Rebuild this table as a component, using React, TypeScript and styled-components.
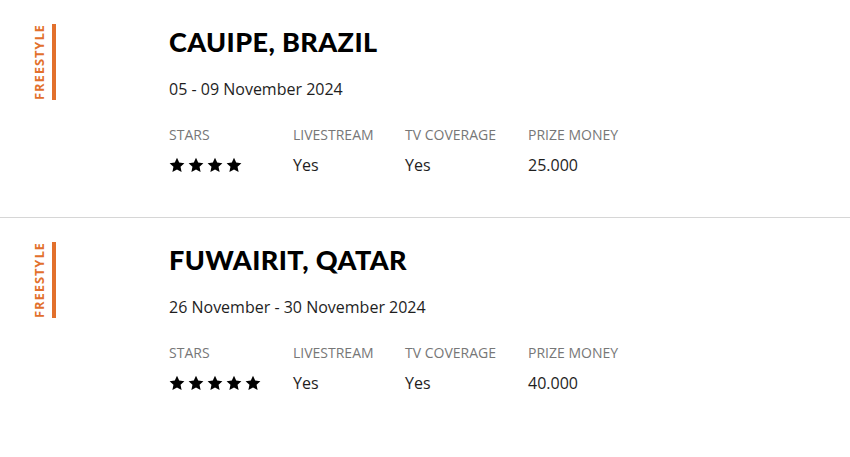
import React from "react";
import styled, { createGlobalStyle } from "styled-components";

const Global = createGlobalStyle`
  html, body { margin: 0; padding: 0; background: #fff; }
  body { font-family: "Open Sans", "Liberation Sans", sans-serif; color: #1a1a1a; }
`;

const List = styled.div`
  display: flex;
  flex-direction: column;
`;

const Event = styled.section<{ $last?: boolean }>`
  display: flex;
  padding-top: 24px;
  height: ${(p) => (p.$last ? "215px" : "193px")};
  border-bottom: ${(p) => (p.$last ? "none" : "1px solid #d6d6d6")};
  box-sizing: content-box;
`;

const TagCol = styled.div`
  width: 169px;
  flex: none;
  display: flex;
  padding-left: 32px;
  box-sizing: border-box;
  align-items: flex-start;
`;

const Tag = styled.div`
  display: flex;
  align-items: stretch;
  height: 76px;
`;

const TagText = styled.span`
  writing-mode: vertical-rl;
  transform: rotate(180deg);
  font-family: "Open Sans", sans-serif;
  font-weight: 700;
  font-size: 13px;
  letter-spacing: 0.9px;
  color: #e2702c;
  text-align: center;
  line-height: 14px;
  margin-right: 6px;
`;

const TagBar = styled.div`
  width: 4px;
  background: #e2702c;
`;

const Body = styled.div`
  display: flex;
  flex-direction: column;
`;

const Title = styled.h2`
  margin: 2px 0 0;
  font-family: Lato, "Open Sans", sans-serif;
  font-weight: 900;
  font-size: 27px;
  line-height: 32px;
  letter-spacing: 0.4px;
  color: #000;
`;

const DateText = styled.div`
  margin-top: 20px;
  font-size: 16px;
  line-height: 22px;
  color: #1e1e1e;
`;

const Stats = styled.div`
  margin-top: 25px;
  display: grid;
  grid-template-columns: 124px 112px 123px auto;
`;

const Stat = styled.div`
  display: flex;
  flex-direction: column;
`;

const Label = styled.div`
  font-size: 14px;
  line-height: 20px;
  color: #777;
  text-transform: uppercase;
`;

const Value = styled.div`
  margin-top: 9px;
  font-size: 16px;
  line-height: 22px;
  color: #1e1e1e;
  display: flex;
  align-items: center;
  height: 22px;
`;

const Stars = styled.div`
  display: flex;
  gap: 3px;
`;

const Star = () => (
  <svg width="16" height="16" viewBox="0 0 24 24" aria-hidden="true">
    <path
      fill="#000"
      d="M12 1.2l3.3 7.2 7.8.9-5.8 5.4 1.6 7.8L12 18.6l-6.9 3.9 1.6-7.8L.9 9.3l7.8-.9z"
    />
  </svg>
);

type Ev = {
  title: string;
  date: string;
  stars: number;
  live: string;
  tv: string;
  prize: string;
};

const events: Ev[] = [
  { title: "CAUIPE, BRAZIL", date: "05 - 09 November 2024", stars: 4, live: "Yes", tv: "Yes", prize: "25.000" },
  { title: "FUWAIRIT, QATAR", date: "26 November - 30 November 2024", stars: 5, live: "Yes", tv: "Yes", prize: "40.000" },
];

export default function App() {
  return (
    <>
      <Global />
      <List>
        {events.map((e, i) => (
          <Event key={e.title} $last={i === events.length - 1}>
            <TagCol>
              <Tag>
                <TagText>FREESTYLE</TagText>
                <TagBar />
              </Tag>
            </TagCol>
            <Body>
              <Title>{e.title}</Title>
              <DateText>{e.date}</DateText>
              <Stats>
                <Stat>
                  <Label>Stars</Label>
                  <Value>
                    <Stars>
                      {Array.from({ length: e.stars }).map((_, k) => (
                        <Star key={k} />
                      ))}
                    </Stars>
                  </Value>
                </Stat>
                <Stat>
                  <Label>Livestream</Label>
                  <Value>{e.live}</Value>
                </Stat>
                <Stat>
                  <Label>TV Coverage</Label>
                  <Value>{e.tv}</Value>
                </Stat>
                <Stat>
                  <Label>Prize Money</Label>
                  <Value>{e.prize}</Value>
                </Stat>
              </Stats>
            </Body>
          </Event>
        ))}
      </List>
    </>
  );
}
